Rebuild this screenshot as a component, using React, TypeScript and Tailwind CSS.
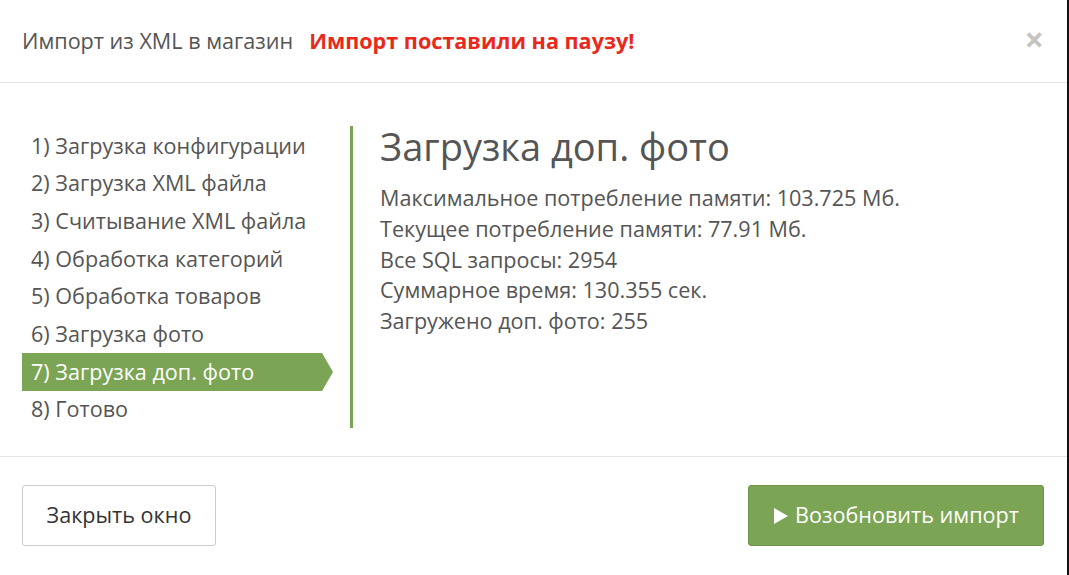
import React from "react";

const steps = [
  "1) Загрузка конфигурации",
  "2) Загрузка XML файла",
  "3) Считывание XML файла",
  "4) Обработка категорий",
  "5) Обработка товаров",
  "6) Загрузка фото",
  "7) Загрузка доп. фото",
  "8) Готово",
];

const stats = [
  "Максимальное потребление памяти: 103.725 Мб.",
  "Текущее потребление памяти: 77.91 Мб.",
  "Все SQL запросы: 2954",
  "Суммарное время: 130.355 сек.",
  "Загружено доп. фото: 255",
];

export default function App() {
  return (
    <div
      className="relative w-[1069px] h-[575px] bg-white overflow-hidden text-[#555]"
      style={{ fontFamily: '"Open Sans", "Noto Sans", sans-serif' }}
    >
      <div className="absolute right-0 top-0 h-full w-[2px] bg-[#111]" />
      <div className="flex flex-col w-[1067px] h-full">
        {/* Header */}
        <div className="flex items-center h-[83px] pl-[22px] pr-[23px] border-b border-[#e5e5e5] shrink-0">
          <span className="text-[21.6px] text-[#555]">Импорт из XML в магазин</span>
          <span className="ml-[16px] text-[21.6px] font-bold text-[#e8291c]">Импорт поставили на паузу!</span>
          <span className="ml-auto text-[#c4c4c4] text-[34px] font-bold leading-none mt-[-4px]">×</span>
        </div>
        {/* Body */}
        <div className="flex h-[374px] border-b border-[#e5e5e5] pt-[43px] shrink-0">
          <div className="w-[300px] ml-[22px] flex flex-col pt-[1px]">
            {steps.map((s, i) =>
              i === 6 ? (
                <div key={s} className="relative h-[37.67px] bg-[#7ba454] text-white flex items-center pl-[9px] text-[21.6px]">
                  {s}
                  <div className="absolute right-[-11px] top-1/2 -translate-y-1/2 w-0 h-0 border-y-[19px] border-y-transparent border-l-[11px] border-l-[#7ba454]" />
                </div>
              ) : (
                <div key={s} className="h-[37.67px] flex items-center pl-[9px] text-[21.6px] text-[#555]">
                  {s}
                </div>
              )
            )}
          </div>
          <div className="ml-[28px] w-[3px] h-[302px] bg-[#7ba454]" />
          <div className="ml-[27px] flex flex-col">
            <div className="text-[38px] leading-[44px] text-[#555] mt-[-2px]">Загрузка доп. фото</div>
            <div className="mt-[15px] flex flex-col">
              {stats.map((s) => (
                <div key={s} className="text-[21.6px] leading-[30.8px] text-[#555]">{s}</div>
              ))}
            </div>
          </div>
        </div>
        {/* Footer */}
        <div className="flex items-start justify-between pl-[22px] pr-[23px] pt-[28px]">
          <button className="h-[61px] w-[194px] border border-[#cccccc] rounded-[3px] bg-white text-[21.6px] text-[#333]">
            Закрыть окно
          </button>
          <button className="h-[61px] w-[296px] border border-[#6e9449] rounded-[3px] bg-[#7ba454] text-[21.6px] text-white flex items-center justify-center gap-[6px]">
            <svg width="16" height="18" viewBox="0 0 16 18"><path d="M1 1 L15 9 L1 17 Z" fill="white" /></svg>
            Возобновить импорт
          </button>
        </div>
      </div>
    </div>
  );
}
